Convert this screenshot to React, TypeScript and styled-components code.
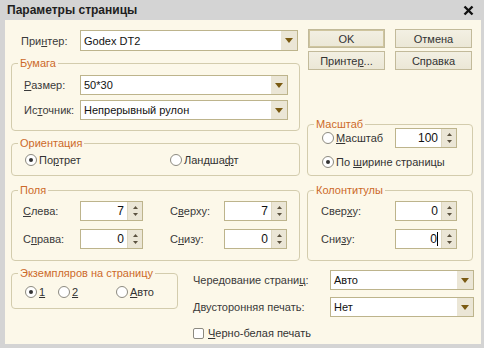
import styled, { createGlobalStyle } from 'styled-components'

const GlobalStyle = createGlobalStyle`
  html, body { margin: 0; padding: 0; }
  body {
    background: #d4d4d4;
    font-family: 'Liberation Sans', Arial, sans-serif;
    font-size: 11px;
    color: #3a3a3a;
  }
`

const CREAM = '#fcf8e9'

export default function App() {
  return (
    <>
      <GlobalStyle />
      <Window>
        <TitleBar>
          <span>Параметры страницы</span>
          <svg width="11" height="11" viewBox="0 0 11 11">
            <path d="M1.5 1.5 L9.5 9.5 M9.5 1.5 L1.5 9.5" stroke="#111" strokeWidth="2.4" />
          </svg>
        </TitleBar>
        <Body>
          <Top>
            <Column>
              <PrinterRow>
                <Label $w={59}>При<U>н</U>тер:</Label>
                <Combo $w={218} $h={21} value="Godex DT2" />
              </PrinterRow>
              <Group $mt={12} $h={68} $pad="11px 0 0 12px">
                <Caption>Бумага</Caption>
                <Stack $gap={5}>
                  <Row>
                    <Label $w={56}><U>Р</U>азмер:</Label>
                    <Combo $w={208} value="50*30" />
                  </Row>
                  <Row>
                    <Label $w={56}>Ис<U>т</U>очник:</Label>
                    <Combo $w={208} value="Непрерывный рулон" />
                  </Row>
                </Stack>
              </Group>
              <Group $mt={12} $h={33} $pad="7px 0 0 13px">
                <Caption>Ориентация</Caption>
                <Row $h={18}>
                  <Radio $w={145} checked>По<U>р</U>трет</Radio>
                  <Radio>Ландша<U>ф</U>т</Radio>
                </Row>
              </Group>
              <Group $mt={14} $h={71} $pad="10px 0 0 11px">
                <Caption>Поля</Caption>
                <SpinGrid $cols="57px 90px 54px 63px">
                  <Label><U>С</U>лева:</Label>
                  <Spin $w={63} value="7" />
                  <Label>С<U>в</U>ерху:</Label>
                  <Spin $w={63} value="7" />
                  <Label>С<U>п</U>рава:</Label>
                  <Spin $w={63} value="0" />
                  <Label>С<U>н</U>изу:</Label>
                  <Spin $w={63} value="0" />
                </SpinGrid>
              </Group>
            </Column>

            <Column>
              <ButtonGrid>
                <Button $default>OK</Button>
                <Button>Отмена</Button>
                <Button>Принте<U>р</U>...</Button>
                <Button>Справка</Button>
              </ButtonGrid>
              <Group $mt={54} $h={52} $pad="3px 0 0 14px">
                <Caption>Масштаб</Caption>
                <Row>
                  <Radio $w={73}><U>М</U>асштаб</Radio>
                  <Spin $w={62} value="100" />
                </Row>
                <Row $h={18} $mt={5}>
                  <Radio checked>По <U>ш</U>ирине страницы</Radio>
                </Row>
              </Group>
              <Group $mt={14} $h={71} $pad="10px 0 0 13px">
                <Caption>Колонтитулы</Caption>
                <SpinGrid $cols="74px 62px">
                  <Label>Свер<U>х</U>у:</Label>
                  <Spin $w={62} value="0" />
                  <Label>Сни<U>з</U>у:</Label>
                  <Spin $w={62} value="0" focused />
                </SpinGrid>
              </Group>
            </Column>
          </Top>

          <Bottom>
            <Group $mt={3} $h={36} $w={167} $pad="9px 0 0 13px">
              <Caption>Экземпляров на страницу</Caption>
              <Row $h={18}>
                <Radio $w={33} checked><U>1</U></Radio>
                <Radio $w={58}><U>2</U></Radio>
                <Radio><U>А</U>вто</Radio>
              </Row>
            </Group>
            <Options>
              <Label>Чередование страни<U>ц</U>:</Label>
              <Combo $w={144} value="Авто" />
              <Label>Двусторонняя печать:</Label>
              <Combo $w={144} value="Нет" />
              <CheckRow>
                <CheckBox />
                <span><U>Ч</U>ерно-белая печать</span>
              </CheckRow>
            </Options>
          </Bottom>
        </Body>
      </Window>
    </>
  )
}

const Combo = ({ value, $w, $h = 20 }: { value: string; $w: number; $h?: number }) => (
  <ComboBox $w={$w} $h={$h}>
    <FieldText>{value}</FieldText>
    <DropButton>
      <svg width="8" height="5" viewBox="0 0 8 5">
        <path d="M0 0 H8 L4 5 Z" fill="#7a5a12" />
      </svg>
    </DropButton>
  </ComboBox>
)

const Spin = ({ value, $w, focused }: { value: string; $w: number; focused?: boolean }) => (
  <SpinBox $w={$w}>
    <SpinValue>
      {value}
      {focused && <Caret />}
    </SpinValue>
    <SpinButtons>
      <svg width="5" height="3" viewBox="0 0 5 3">
        <path d="M0 3 H5 L2.5 0 Z" fill="#5b5240" />
      </svg>
      <svg width="5" height="3" viewBox="0 0 5 3">
        <path d="M0 0 H5 L2.5 3 Z" fill="#5b5240" />
      </svg>
    </SpinButtons>
  </SpinBox>
)

const Radio = ({ children, checked, $w }: { children: React.ReactNode; checked?: boolean; $w?: number }) => (
  <RadioItem $w={$w}>
    <RadioCircle>{checked && <RadioDot />}</RadioCircle>
    <span>{children}</span>
  </RadioItem>
)

const Window = styled.div`
  width: 484px;
  height: 348px;
  box-sizing: border-box;
  display: flex;
  flex-direction: column;
  background: #d4d4d4;
  padding: 0 3px 5px 5px;
`

const TitleBar = styled.div`
  height: 20px;
  flex: none;
  display: flex;
  align-items: center;
  justify-content: space-between;
  padding: 0 7px 0 2px;
  font-size: 12px;
  font-weight: bold;
  color: #1e1e1e;
`

const Body = styled.div`
  flex: 1;
  background: ${CREAM};
  padding: 0 7px 0 6px;
`

const Top = styled.div`
  display: grid;
  grid-template-columns: 289px 166px;
  column-gap: 7px;
  align-items: start;
`

const Column = styled.div`
  display: flex;
  flex-direction: column;
`

const Row = styled.div<{ $h?: number; $mt?: number }>`
  display: flex;
  align-items: center;
  height: ${p => p.$h ?? 20}px;
  margin-top: ${p => p.$mt ?? 0}px;
`

const PrinterRow = styled(Row)`
  margin-top: 10px;
  height: 21px;
  padding-left: 10px;
`

const Stack = styled.div<{ $gap: number }>`
  display: flex;
  flex-direction: column;
  gap: ${p => p.$gap}px;
`

const Label = styled.span<{ $w?: number }>`
  display: flex;
  align-items: center;
  ${p => (p.$w ? `width: ${p.$w}px; flex: none;` : '')}
  color: #3a3a3a;
  white-space: nowrap;
`

const U = styled.span`
  text-decoration: underline;
`

const Group = styled.div<{ $mt: number; $h: number; $w?: number; $pad: string }>`
  position: relative;
  box-sizing: border-box;
  margin-top: ${p => p.$mt}px;
  height: ${p => p.$h}px;
  ${p => (p.$w ? `width: ${p.$w}px; flex: none;` : '')}
  padding: ${p => p.$pad};
  border: 1px solid #d3ccad;
  border-radius: 4px;
`

const Caption = styled.span`
  position: absolute;
  top: -7px;
  left: 6px;
  padding: 0 2px;
  line-height: 13px;
  background: ${CREAM};
  color: #cc6a2a;
  white-space: nowrap;
`

const ComboBox = styled.div<{ $w: number; $h: number }>`
  box-sizing: border-box;
  width: ${p => p.$w}px;
  height: ${p => p.$h}px;
  display: flex;
  border: 1px solid #bdb48c;
  background: #fff;
`

const FieldText = styled.span`
  flex: 1;
  display: flex;
  align-items: center;
  padding-left: 3px;
  color: #111;
  white-space: nowrap;
  overflow: hidden;
`

const DropButton = styled.span`
  width: 16px;
  display: flex;
  align-items: center;
  justify-content: center;
  background: #ebe6d6;
`

const SpinGrid = styled.div<{ $cols: string }>`
  display: grid;
  grid-template-columns: ${p => p.$cols};
  grid-auto-rows: 20px;
  row-gap: 8px;
`

const SpinBox = styled.div<{ $w: number }>`
  box-sizing: border-box;
  width: ${p => p.$w}px;
  height: 20px;
  display: flex;
  border: 1px solid #bdb48c;
  background: #fff;
`

const SpinValue = styled.span`
  flex: 1;
  display: flex;
  align-items: center;
  justify-content: flex-end;
  padding-right: 3px;
  color: #111;
  font-size: 12px;
`

const Caret = styled.span`
  width: 1px;
  height: 14px;
  background: #000;
`

const SpinButtons = styled.span`
  width: 14px;
  display: flex;
  flex-direction: column;
  align-items: center;
  justify-content: space-around;
  background: #ebe6d6;
  border-left: 1px solid #ddd7c0;
  padding: 2px 0;
`

const ButtonGrid = styled.div`
  display: grid;
  grid-template-columns: 77px 77px;
  grid-auto-rows: 19px;
  column-gap: 10px;
  row-gap: 3px;
  margin: 9px 0 0 1px;
`

const Button = styled.div<{ $default?: boolean }>`
  box-sizing: border-box;
  display: flex;
  align-items: center;
  justify-content: center;
  background: linear-gradient(#f3f0e3, #ebe7d6);
  border: 1px solid #c2ba9a;
  box-shadow: ${p => (p.$default ? 'inset 0 0 0 1px #cfc59e' : 'none')};
  color: #333;
`

const RadioItem = styled.label<{ $w?: number }>`
  display: flex;
  align-items: center;
  gap: 2px;
  ${p => (p.$w ? `width: ${p.$w}px; flex: none;` : '')}
  color: #333;
  white-space: nowrap;
`

const RadioCircle = styled.span`
  box-sizing: border-box;
  width: 12px;
  height: 12px;
  border-radius: 50%;
  border: 1px solid #8c8a80;
  background: #fff;
  display: flex;
  align-items: center;
  justify-content: center;
`

const RadioDot = styled.span`
  width: 4px;
  height: 4px;
  border-radius: 50%;
  background: #333;
`

const Bottom = styled.div`
  display: flex;
  align-items: flex-start;
  margin-top: 9px;
`

const Options = styled.div`
  margin-left: 15px;
  display: grid;
  grid-template-columns: 137px 144px;
  grid-auto-rows: 20px;
  row-gap: 7px;
`

const CheckRow = styled.label`
  grid-column: 1 / span 2;
  display: flex;
  align-items: center;
  gap: 4px;
  height: 12px;
  margin-top: 3px;
  color: #333;
`

const CheckBox = styled.span`
  box-sizing: border-box;
  width: 11px;
  height: 11px;
  border: 1px solid #8c8a80;
  border-radius: 2px;
  background: #fff;
`
